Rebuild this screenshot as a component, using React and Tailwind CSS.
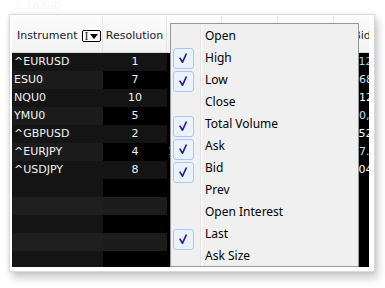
import React from 'react';

/* ─── DATA ──────────────────────────────────────────────────────────────── */
const rows = [
  { sym: '^EURUSD', res: 1, bid: '1.31295', bidPad: 'pl-[7px]', bidColor: 'text-[#9cd0ff]' },
  { sym: 'ESU0', res: 7, bid: '1268.50', bidPad: 'pl-[11px]', bidColor: 'text-[#dcdcff]' },
  { sym: 'NQU0', res: 10, bid: '2112.25', bidPad: 'pl-[11px]', bidColor: 'text-[#ffffff]', red: true },
  { sym: 'YMU0', res: 5, bid: '10,180', bidPad: 'pl-[18px]', bidColor: 'text-[#cce0ff]' },
  { sym: '^GBPUSD', res: 2, bid: '1.55204', bidPad: 'pl-[7px]', bidColor: 'text-[#ffffff]' },
  { sym: '^EURJPY', res: 4, bid: '107.54', bidPad: 'pl-[11px]', bidColor: 'text-[#c0e0ff]', peek: '1' },
  { sym: '^USDJPY', res: 8, bid: '80.04', bidPad: 'pl-[7px]', bidColor: 'text-[#ffffff]' },
  {}, {}, {}, {}, {},
];

const menu = [
  { label: 'Open' },
  { label: 'High', on: true },
  { label: 'Low', on: true },
  { label: 'Close' },
  { label: 'Total Volume', on: true },
  { label: 'Ask', on: true },
  { label: 'Bid', on: true },
  { label: 'Prev' },
  { label: 'Open Interest' },
  { label: 'Last', on: true },
  { label: 'Ask Size' },
];

/* ─── PIECES ─────────────────────────────────────────────────────────────── */
function Check() {
  return (
    <div className="ml-[2px] mt-[1px] w-[21px] h-[21px] rounded-[3px] border border-[#aac8ee] bg-[#eaf2fd] flex items-center justify-center">
      <svg width="21" height="21" viewBox="0 0 21 21">
        <path d="M6.3 9.6 L9.4 14.6 L13.8 5" fill="none" stroke="#1f1f8f" strokeWidth="1.8" strokeLinejoin="round" />
      </svg>
    </div>
  );
}

function rowColors(i, empty) {
  if (!empty) {
    return i % 2 === 0 ? ['bg-[#141414]', 'bg-[#141414]'] : ['bg-[#1c1c1c]', 'bg-[#000000]'];
  }
  return i % 2 === 1 ? ['bg-[#141414]', 'bg-[#000000]'] : ['bg-[#1e1e1e]', 'bg-[#1c1c1c]'];
}

/* ─── MAIN ───────────────────────────────────────────────────────────────── */
export default function App() {
  const font = { fontFamily: '"DejaVu Sans", Verdana, sans-serif' };
  return (
    <div className="w-[385px] h-[288px] bg-white overflow-hidden" style={font}>
      <div className="h-[14px] pl-[15px] text-[11px] leading-[12px] text-[#f5f5f5]">1.18200</div>

      {/* ── CARD ── */}
      <div className="relative ml-[9px] w-[366px] h-[258px] bg-white border border-[#dadada] pl-[2px] pt-[1px] shadow-[0_0_4px_rgba(0,0,0,0.10),3px_6px_8px_rgba(0,0,0,0.2)]">
        <div className="w-[357px] h-[251px] overflow-hidden bg-black text-[11px]">
          {/* header */}
          <div className="flex h-[37px] w-[400px] bg-gradient-to-b from-[#fcfcfc] to-[#f2f2f2] border-b border-[#d8d8d8] text-[#1b1b2b]">
            <div className="w-[91px] shrink-0 flex items-center pl-[5px] pt-[4px] border-r border-[#e4e4e4]">
              <span>Instrument</span>
              <span className="ml-[4px] w-[19px] h-[12px] border border-black rounded-[2px] flex items-center justify-center gap-[1px] bg-white">
                <span className="text-[12px] leading-none" style={{ fontFamily: '"Liberation Serif", serif' }}>I</span>
                <svg width="8" height="5" viewBox="0 0 8 5"><path d="M0 0 H8 L4 5 Z" fill="#000" /></svg>
              </span>
            </div>
            <div className="w-[64px] shrink-0 flex items-center justify-center pt-[4px] border-r border-[#e4e4e4]">Resolution</div>
            <div className="w-[55px] shrink-0 border-r border-[#e4e4e4]" />
            <div className="w-[56px] shrink-0 border-r border-[#e4e4e4]" />
            <div className="w-[56px] shrink-0 border-r border-[#e4e4e4]" />
            <div className="w-[56px] shrink-0 flex items-center justify-center pt-[4px]">Bid</div>
          </div>

          {/* rows */}
          {rows.map((r, i) => {
            const [left, mid] = rowColors(i, !r.sym);
            return (
              <div key={i} className="flex h-[18px] w-[400px] items-center text-[#f2f2f2]">
                <div className={`w-[91px] h-full shrink-0 flex items-center pl-[2px] ${left}`}>{r.sym}</div>
                <div className={`w-[64px] h-full shrink-0 flex items-center justify-center ${mid}`}>{r.res}</div>
                <div className="w-[55px] h-full shrink-0 flex items-center pl-[1px] text-[#6aa8ff]">{r.peek}</div>
                <div className="w-[56px] h-full shrink-0" />
                <div className="w-[56px] h-full shrink-0" />
                <div className={`w-[60px] h-full shrink-0 flex items-center ${r.bidPad || ''} ${r.bidColor || ''}`}>
                  {r.red ? (<><span>2</span><span className="text-[#ff4040]">1</span><span>12.25</span></>) : r.bid}
                </div>
              </div>
            );
          })}
        </div>

        {/* ── COLUMN MENU ── */}
        <div className="absolute left-[160px] top-[8px] w-[189px] h-[244px] bg-[#f0f0f0] border border-[#979797] flex text-black" style={{ fontFamily: '"Noto Sans", "Open Sans", sans-serif' }}>
          <div className="w-[29px] shrink-0 pt-[1px]">
            {menu.map((m, i) => (
              <div key={i} className="h-[22px]">{m.on && <Check />}</div>
            ))}
          </div>
          <div className="w-[1px] bg-[#e2e3e3]" />
          <div className="w-[1px] bg-white" />
          <div className="flex-1 pt-[1px] pl-[3px]">
            {menu.map((m, i) => (
              <div key={i} className="h-[22px] flex items-center text-[12px]">{m.label}</div>
            ))}
          </div>
        </div>
      </div>
    </div>
  );
}
